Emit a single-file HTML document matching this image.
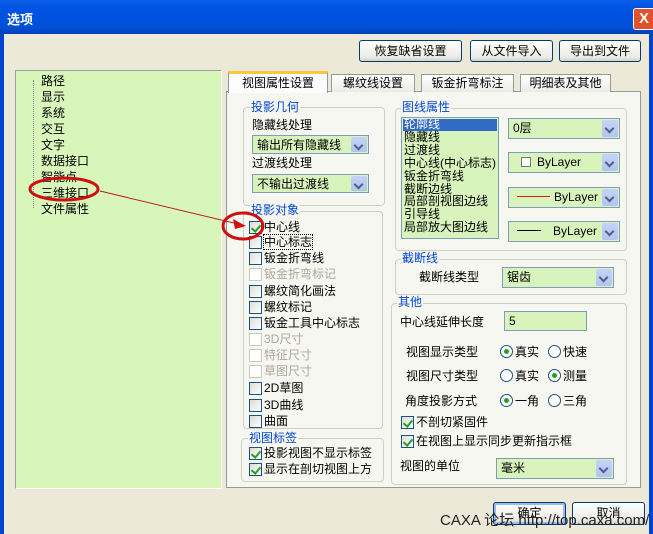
<!DOCTYPE html>
<html><head><meta charset="utf-8"><style>
*{margin:0;padding:0;box-sizing:border-box}
body{width:653px;height:534px;overflow:hidden;background:#ECE9D8;font:12px "Liberation Sans","Noto Sans CJK SC","WenQuanYi Zen Hei",sans-serif;color:#000;position:relative}
.a{position:absolute;white-space:nowrap}
.t{position:absolute;white-space:nowrap;line-height:14px}
.btn{position:absolute;border:1px solid #003C74;border-radius:3px;background:linear-gradient(#fff,#ECEBE6 80%,#D6D0C5);text-align:center;line-height:20px}
.grp{position:absolute;border:1px solid #D0D0BF;border-radius:4px}
.gl{position:absolute;color:#0046D5;background:#F7F7F2;padding:0 1px;line-height:14px}
.cb{position:absolute;width:13px;height:13px;border:1px solid #1C5180;background:linear-gradient(135deg,#DCDCD7,#fff)}
.cb.dis{border-color:#CAC8BB;background:#fff}
.cb.on::after{content:"";position:absolute;left:3px;top:1px;width:4px;height:7px;border:solid #21A121;border-width:0 2px 2px 0;transform:rotate(40deg)}
.dis+.t,.gray{color:#ACA899}
.combo{position:absolute;border:1px solid #7F9DB9;background:#D8F3BC;line-height:18px;padding-left:4px}
.combo .dd{position:absolute;right:1px;top:1px;bottom:1px;width:16px;background:linear-gradient(#C6D3F7,#B2C4F2);border-radius:2px}
.combo .dd::after{content:"";position:absolute;left:4px;top:5px;width:5px;height:5px;border:solid #4D6185;border-width:0 2px 2px 0;transform:rotate(45deg)}
.rb{position:absolute;width:13px;height:13px;border:1px solid #1C5180;border-radius:50%;background:#fff}
.rb.on::after{content:"";position:absolute;left:3px;top:3px;width:5px;height:5px;border-radius:50%;background:#21A121}
</style></head><body>
<!-- title bar -->
<div class="a" style="left:0;top:0;width:653px;height:34px;background:linear-gradient(#0A5FE6,#0054E3 20%,#0150D8 80%,#0040B8)"></div>
<div class="a" style="left:7px;top:9px;color:#fff;font-weight:bold;font-size:13px">选项</div>
<div class="a" style="left:633px;top:8px;width:22px;height:22px;background:#E0512C;border:1px solid #fff;border-radius:3px;color:#fff;font-weight:bold;text-align:center;line-height:19px;font-size:15px">X</div>
<div class="a" style="left:0;top:34px;width:4px;height:500px;background:#0044D0"></div>
<div class="a" style="left:649px;top:34px;width:4px;height:500px;background:#0044D0"></div>

<div class="btn" style="left:359px;top:40px;width:103px;height:22px">恢复缺省设置</div>
<div class="btn" style="left:470px;top:40px;width:83px;height:22px">从文件导入</div>
<div class="btn" style="left:559px;top:40px;width:82px;height:22px">导出到文件</div>

<!-- tree -->
<div class="a" style="left:15px;top:70px;width:207px;height:419px;background:#D8F5BA;border:1px solid #7F9DB9;border-color:#A0A0A0 #fff #fff #A0A0A0"></div>
<div class="a" style="left:33px;top:80px;width:1px;height:128px;border-left:1px dotted #888"></div>
<div class="t" style="left:41px;top:73px;line-height:16px">路径<br>显示<br>系统<br>交互<br>文字<br>数据接口<br>智能点<br>三维接口<br>文件属性</div>

<!-- tabs -->
<div class="a" style="left:226px;top:91px;width:415px;height:397px;background:#F7F7F2;border:1px solid #919B9C"></div>
<div class="a" style="left:331px;top:74px;width:84px;height:18px;border:1px solid #919B9C;border-bottom:0;background:linear-gradient(#fff,#ECEBE6);text-align:center;line-height:17px">螺纹线设置</div>
<div class="a" style="left:421px;top:74px;width:93px;height:18px;border:1px solid #919B9C;border-bottom:0;background:linear-gradient(#fff,#ECEBE6);text-align:center;line-height:17px">钣金折弯标注</div>
<div class="a" style="left:520px;top:74px;width:91px;height:18px;border:1px solid #919B9C;border-bottom:0;background:linear-gradient(#fff,#ECEBE6);text-align:center;line-height:17px">明细表及其他</div>
<div class="a" style="left:228px;top:71px;width:100px;height:22px;border:1px solid #919B9C;border-top:3px solid #FFC83C;border-bottom:0;background:#FCFCFE;text-align:center;line-height:18px">视图属性设置</div>

<!-- 投影几何 -->
<div class="grp" style="left:243px;top:107px;width:142px;height:99px"></div>
<div class="gl" style="left:250px;top:100px">投影几何</div>
<div class="t" style="left:252px;top:118px">隐藏线处理</div>
<div class="combo" style="left:252px;top:135px;width:117px;height:19px">输出所有隐藏线<div class="dd"></div></div>
<div class="t" style="left:252px;top:156px">过渡线处理</div>
<div class="combo" style="left:252px;top:174px;width:117px;height:19px">不输出过渡线<div class="dd"></div></div>

<!-- 投影对象 -->
<div class="grp" style="left:243px;top:211px;width:140px;height:218px"></div>
<div class="gl" style="left:250px;top:203px">投影对象</div>
<div class="cb on" style="left:249px;top:221px"></div><div class="t" style="left:264px;top:220px">中心线</div>
<div class="cb" style="left:249px;top:236px"></div><div class="t" style="left:264px;top:235px;outline:1px dotted #000">中心标志</div>
<div class="cb" style="left:249px;top:252px"></div><div class="t" style="left:264px;top:251px">钣金折弯线</div>
<div class="cb dis" style="left:249px;top:268px"></div><div class="t" style="left:264px;top:267px">钣金折弯标记</div>
<div class="cb" style="left:249px;top:285px"></div><div class="t" style="left:264px;top:284px">螺纹简化画法</div>
<div class="cb" style="left:249px;top:301px"></div><div class="t" style="left:264px;top:300px">螺纹标记</div>
<div class="cb" style="left:249px;top:317px"></div><div class="t" style="left:264px;top:316px">钣金工具中心标志</div>
<div class="cb dis" style="left:249px;top:333px"></div><div class="t" style="left:264px;top:332px">3D尺寸</div>
<div class="cb dis" style="left:249px;top:349px"></div><div class="t" style="left:264px;top:348px">特征尺寸</div>
<div class="cb dis" style="left:249px;top:365px"></div><div class="t" style="left:264px;top:364px">草图尺寸</div>
<div class="cb" style="left:249px;top:382px"></div><div class="t" style="left:264px;top:381px">2D草图</div>
<div class="cb" style="left:249px;top:399px"></div><div class="t" style="left:264px;top:398px">3D曲线</div>
<div class="cb" style="left:249px;top:415px"></div><div class="t" style="left:264px;top:414px">曲面</div>

<!-- 视图标签 -->
<div class="grp" style="left:241px;top:438px;width:143px;height:44px"></div>
<div class="gl" style="left:248px;top:431px">视图标签</div>
<div class="cb on" style="left:249px;top:447px"></div><div class="t" style="left:264px;top:446px">投影视图不显示标签</div>
<div class="cb on" style="left:249px;top:463px"></div><div class="t" style="left:264px;top:462px">显示在剖切视图上方</div>

<!-- 图线属性 -->
<div class="grp" style="left:395px;top:108px;width:232px;height:143px"></div>
<div class="gl" style="left:401px;top:100px">图线属性</div>
<div class="a" style="left:401px;top:117px;width:98px;height:122px;background:#D8F3BC;border:1px solid #7F9DB9"></div>
<div class="a" style="left:403px;top:119px;width:94px;height:12px;background:#316AC5"></div>
<div class="t" style="left:404px;top:118px;line-height:12.9px"><span style="color:#fff">轮廓线</span><br>隐藏线<br>过渡线<br>中心线(中心标志)<br>钣金折弯线<br>截断边线<br>局部剖视图边线<br>引导线<br>局部放大图边线</div>
<div class="combo" style="left:508px;top:118px;width:112px;height:21px;line-height:19px">0层<div class="dd"></div></div>
<div class="combo" style="left:508px;top:152px;width:112px;height:21px;line-height:19px"><span style="display:inline-block;width:10px;height:10px;border:1px solid #777;background:#fff;margin:0 6px 0 8px;vertical-align:-1px"></span>ByLayer<div class="dd"></div></div>
<div class="combo" style="left:508px;top:187px;width:112px;height:21px;line-height:19px"><span style="display:inline-block;width:33px;border-top:1px solid #D02010;margin:0 4px 4px 4px"></span>ByLayer<div class="dd"></div></div>
<div class="combo" style="left:508px;top:221px;width:112px;height:21px;line-height:19px"><span style="display:inline-block;width:24px;border-top:1px solid #000;margin:0 12px 4px 4px"></span>ByLayer<div class="dd"></div></div>

<!-- 截断线 -->
<div class="grp" style="left:395px;top:259px;width:232px;height:36px"></div>
<div class="gl" style="left:401px;top:251px">截断线</div>
<div class="t" style="left:419px;top:270px">截断线类型</div>
<div class="combo" style="left:502px;top:267px;width:112px;height:21px;line-height:19px">锯齿<div class="dd"></div></div>

<!-- 其他 -->
<div class="grp" style="left:391px;top:303px;width:236px;height:182px"></div>
<div class="gl" style="left:397px;top:295px">其他</div>
<div class="t" style="left:400px;top:315px">中心线延伸长度</div>
<div class="a" style="left:504px;top:311px;width:83px;height:20px;border:1px solid #7F9DB9;background:#D8F3BC;padding-left:4px;line-height:18px">5</div>
<div class="t" style="left:406px;top:345px">视图显示类型</div>
<div class="rb on" style="left:500px;top:345px"></div><div class="t" style="left:515px;top:345px">真实</div>
<div class="rb" style="left:548px;top:345px"></div><div class="t" style="left:563px;top:345px">快速</div>
<div class="t" style="left:406px;top:369px">视图尺寸类型</div>
<div class="rb" style="left:500px;top:369px"></div><div class="t" style="left:515px;top:369px">真实</div>
<div class="rb on" style="left:548px;top:369px"></div><div class="t" style="left:563px;top:369px">测量</div>
<div class="t" style="left:405px;top:394px">角度投影方式</div>
<div class="rb on" style="left:500px;top:394px"></div><div class="t" style="left:515px;top:394px">一角</div>
<div class="rb" style="left:548px;top:394px"></div><div class="t" style="left:563px;top:394px">三角</div>
<div class="cb on" style="left:401px;top:416px"></div><div class="t" style="left:416px;top:415px">不剖切紧固件</div>
<div class="cb on" style="left:401px;top:435px"></div><div class="t" style="left:416px;top:434px">在视图上显示同步更新指示框</div>
<div class="t" style="left:400px;top:459px">视图的单位</div>
<div class="combo" style="left:496px;top:458px;width:118px;height:21px;line-height:19px">毫米<div class="dd"></div></div>

<!-- bottom -->
<div class="btn" style="left:493px;top:502px;width:73px;height:23px;border-color:#003C74;box-shadow:inset 0 0 0 2px #9DB8EB">确定</div>
<div class="btn" style="left:572px;top:502px;width:73px;height:23px">取消</div>
<div class="a" style="left:440px;top:509px;font-size:15px;color:#222">CAXA 论坛 http://top.caxa.com/</div>

<!-- annotations -->
<svg class="a" style="left:0;top:0" width="653" height="534">
<ellipse cx="64" cy="189" rx="34" ry="11" fill="none" stroke="#D01010" stroke-width="3"/>
<ellipse cx="243" cy="226" rx="20" ry="13" fill="none" stroke="#D01010" stroke-width="3"/>
<line x1="100" y1="191" x2="238" y2="224" stroke="#C02020" stroke-width="1"/>
<polygon points="246,226 233,219 235,229" fill="#D01010"/>
</svg>
</body></html>
